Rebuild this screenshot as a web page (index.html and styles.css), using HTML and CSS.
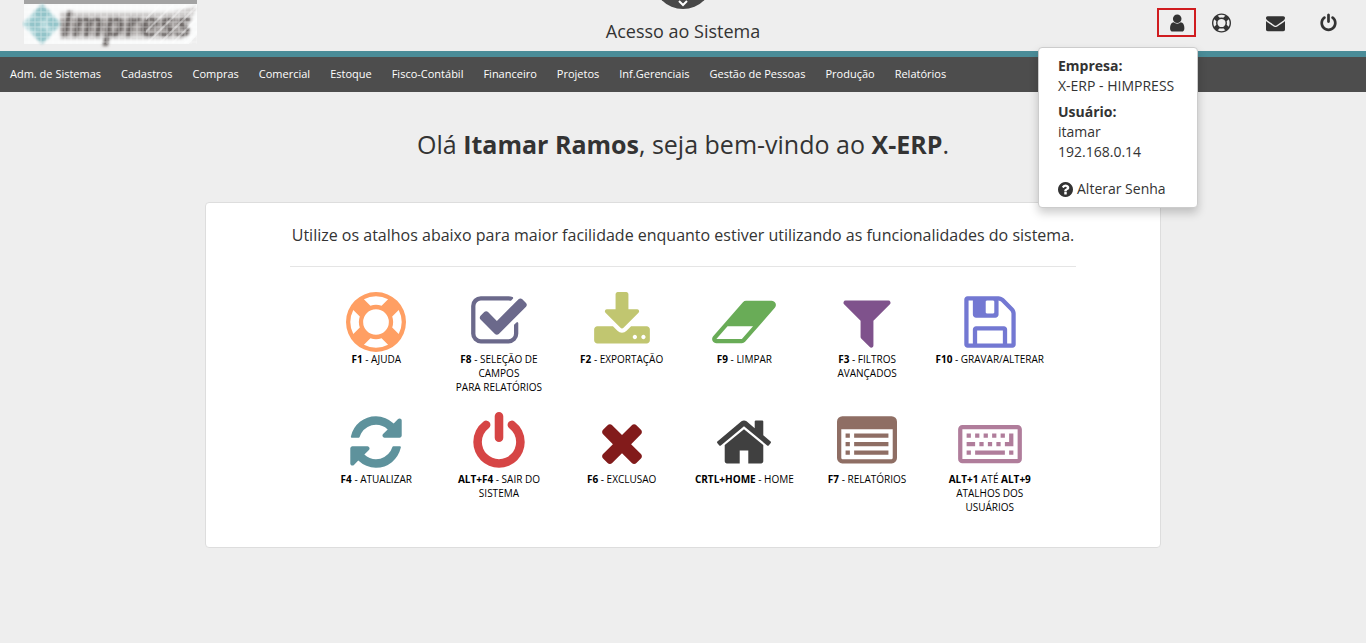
FILE: index.html
```html
<!DOCTYPE html>
<html lang="pt-BR">
<head>
<meta charset="utf-8">
<title>Acesso ao Sistema</title>
<link rel="stylesheet" href="styles.css">
</head>
<body>
<svg class="defs" aria-hidden="true">
  <symbol id="ring" viewBox="0 0 1792 1792"><path d="M896 0q182 0 348 71t286 191 191 286 71 348-71 348-191 286-286 191-348 71-348-71-286-191-191-286-71-348 71-348 191-286 286-191 348-71zm0 128q-190 0-361 90l194 194q82-28 167-28t167 28l194-194q-171-90-361-90zm-678 1129l194-194q-28-82-28-167t28-167l-194-194q-90 171-90 361t90 361zm678 407q190 0 361-90l-194-194q-82 28-167 28t-167-28l-194 194q171 90 361 90zm0-384q159 0 271.5-112.5t112.5-271.5-112.5-271.5-271.5-112.5-271.5 112.5-112.5 271.5 112.5 271.5 271.5 112.5zm484-217l194 194q90-171 90-361t-90-361l-194 194q28 82 28 167t-28 167z"/></symbol>
  <symbol id="power" viewBox="0 0 1792 1792"><path d="M1664 896q0 156-61 298t-164 245-245 164-298 61-298-61-245-164-164-245-61-298q0-182 80.5-343t226.5-270q43-32 95.5-25t83.5 50q32 42 24.5 94.5t-49.5 84.5q-98 74-151.5 181t-53.5 228q0 104 40.5 198.5t109.5 163.5 163.5 109.5 198.5 40.5 198.5-40.5 163.5-109.5 109.5-163.5 40.5-198.5q0-121-53.5-228t-151.5-181q-42-32-49.5-84.5t24.5-94.5q31-43 84-50t95 25q146 109 226.5 270t80.5 343zm-640-768v640q0 52-38 90t-90 38-90-38-38-90v-640q0-52 38-90t90-38 90 38 38 90z"/></symbol>
</svg>
<header class="topbar">
  <a class="logo" href="#" aria-label="Himpress">
    <svg class="logo-art" viewBox="0 0 176 51">
      <defs>
        <pattern id="mesh" width="6" height="5" patternUnits="userSpaceOnUse"><path d="M1 0v5M0 2h6" stroke="#fff" stroke-width="1" opacity=".4"/></pattern>
        <pattern id="hatch" width="9" height="9" patternUnits="userSpaceOnUse" patternTransform="rotate(45)"><path d="M2 0v9" stroke="#fff" stroke-width="2" opacity=".4"/></pattern>
        <filter id="soft" x="-10%" y="-10%" width="120%" height="120%"><feGaussianBlur stdDeviation="1.4"/></filter>
      </defs>
      <path d="M2 4h173v31l-8 9H2z" fill="#f9fafa"/>
      <path d="M2 0h173v4H2z" fill="#a3a3a3"/>
      <g filter="url(#soft)">
        <path d="M0 24L20 4l20 20-20 20z" fill="#b9dcdf"/>
        <path d="M20 4l9 9-9 9-9-9zM5 24l8-8 7 8-7 8zM20 27l9 8-9 9-9-9zM24 22l6-6 8 8-7 7z" fill="#93c4c9"/>
        <path d="M38 12h112l25-6-15 33H38z" fill="#d0cecd"/>
        <path d="M38 19h112l18-2-10 17H38z" fill="#aaa6a4"/>
        <text class="logo-word" x="39" y="37">Impress</text>
      </g>
      <path d="M2 4h173v40H2z" fill="url(#mesh)"/>
      <path d="M124 5h51v38h-51z" fill="url(#hatch)"/>
    </svg>
  </a>
  <div class="title-area">
    <button class="pull-tab" aria-label="Abrir painel">
      <svg viewBox="0 0 46 9"><circle cx="23" cy="-21" r="30" fill="#484848"/><path d="M19 1l4 4 4-4" fill="none" stroke="#fff" stroke-width="2"/></svg>
    </button>
    <h1 class="title">Acesso ao Sistema</h1>
  </div>
  <div class="tools">
    <div class="user">
      <button class="tool tool-user" aria-label="Usuário" aria-expanded="true">
        <svg class="tool-icon" viewBox="0 0 1664 1792"><path d="M1536 1399q0 109-62.5 187t-150.5 78h-854q-88 0-150.5-78t-62.5-187q0-85 8.5-160.5t31.5-152 58.5-131 94-89 134.5-34.5q131 128 313 128t313-128q76 0 134.5 34.5t94 89 58.5 131 31.5 152 8.5 160.5zm-256-887q0 159-112.5 271.5t-271.5 112.5-271.5-112.5-112.5-271.5 112.5-271.5 271.5-112.5 271.5 112.5 112.5 271.5z"/></svg>
      </button>
      <div class="user-menu">
        <dl class="user-info">
          <dt>Empresa:</dt><dd>X-ERP - HIMPRESS</dd>
          <dt>Usuário:</dt><dd>itamar</dd><dd>192.168.0.14</dd>
        </dl>
        <a class="password" href="#">
          <svg class="help-icon" viewBox="128 128 1536 1536"><path d="M1024 1376v-192q0-14-9-23t-23-9h-192q-14 0-23 9t-9 23v192q0 14 9 23t23 9h192q14 0 23-9t9-23zm256-672q0-88-55.5-163t-138.5-116-170-41q-243 0-371 213-15 24 8 42l132 100q7 6 19 6 16 0 25-12 53-68 86-92 34-24 86-24 48 0 85.5 26t37.5 59q0 38-20 61t-68 45q-63 28-115.5 86.5t-52.5 125.5v36q0 14 9 23t23 9h192q14 0 23-9t9-23q0-19 21.5-49.5t54.5-49.5q32-18 49-28.5t46-35 44.5-48 28-60.5 12.5-81zm384 192q0 209-103 385.5t-279.5 279.5-385.5 103-385.5-103-279.5-279.5-103-385.5 103-385.5 279.5-279.5 385.5-103 385.5 103 279.5 279.5 103 385.5z"/></svg>
          <span>Alterar Senha</span>
        </a>
      </div>
    </div>
    <button class="tool tool-help" aria-label="Ajuda"><svg class="tool-icon"><use href="#ring"/></svg></button>
    <button class="tool" aria-label="Mensagens"><svg class="tool-icon" viewBox="0 0 1792 1792"><path d="M1792 710v794q0 66-47 113t-113 47h-1472q-66 0-113-47t-47-113v-794q44 49 101 87 362 246 497 345 57 42 92.5 65.5t94.5 48 110 24.5h2q51 0 110-24.5t94.5-48 92.5-65.5q170-123 498-345 57-39 100-87zm0-294q0 79-49 151t-122 123q-376 261-468 325-10 7-42.5 31t-54 38.5-52 32.5-57.5 27-50 9h-2q-23 0-50-9t-57.5-27-52-32.5-54-38.5-42.5-31q-91-64-262-182.5t-205-142.5q-62-42-117-115.5t-55-136.5q0-78 41.5-130t118.5-52h1472q65 0 112.5 47t47.5 113z"/></svg></button>
    <button class="tool" aria-label="Sair"><svg class="tool-icon"><use href="#power"/></svg></button>
  </div>
</header>
<nav class="menu">
  <a href="#">Adm. de Sistemas</a><a href="#">Cadastros</a><a href="#">Compras</a><a href="#">Comercial</a><a href="#">Estoque</a><a href="#">Fisco-Contábil</a><a href="#">Financeiro</a><a href="#">Projetos</a><a href="#">Inf.Gerenciais</a><a href="#">Gestão de Pessoas</a><a href="#">Produção</a><a href="#">Relatórios</a>
</nav>
<main class="content">
  <h2 class="welcome">Olá <b>Itamar Ramos</b>, seja bem-vindo ao <b>X-ERP</b>.</h2>
  <section class="card">
    <p class="intro">Utilize os atalhos abaixo para maior facilidade enquanto estiver utilizando as funcionalidades do sistema.</p>
    <div class="shortcuts">
      <a class="shortcut" href="#"><svg class="icon orange"><use href="#ring"/></svg><span><b>F1</b> - AJUDA</span></a>
      <a class="shortcut" href="#"><svg class="icon slate" viewBox="0 0 1792 1792"><path d="M1472 930v318q0 119-84.5 203.5t-203.5 84.5h-832q-119 0-203.5-84.5t-84.5-203.5v-832q0-119 84.5-203.5t203.5-84.5h832q63 0 117 25 15 7 18 23 3 17-9 29l-49 49q-10 10-23 10-3 0-9-2-23-6-45-6h-832q-66 0-113 47t-47 113v832q0 66 47 113t113 47h832q66 0 113-47t47-113v-254q0-13 9-22l64-64q10-10 23-10 6 0 12 3 20 8 20 29zm231-489l-814 814q-24 24-57 24t-57-24l-430-430q-24-24-24-57t24-57l110-110q24-24 57-24t57 24l263 263 647-647q24-24 57-24t57 24l110 110q24 24 24 57t-24 57z"/></svg><span><b>F8</b> - SELEÇÃO DE CAMPOS<br>PARA RELATÓRIOS</span></a>
      <a class="shortcut" href="#"><svg class="icon olive" viewBox="0 0 1792 1792"><path d="M1344 1344q0-26-19-45t-45-19-45 19-19 45 19 45 45 19 45-19 19-45zm256 0q0-26-19-45t-45-19-45 19-19 45 19 45 45 19 45-19 19-45zm128-224v320q0 40-28 68t-68 28h-1472q-40 0-68-28t-28-68v-320q0-40 28-68t68-28h465l135 136q58 56 136 56t136-56l136-136h464q40 0 68 28t28 68zm-325-569q17 41-14 70l-448 448q-18 19-45 19t-45-19l-448-448q-31-29-14-70 17-39 59-39h256v-448q0-26 19-45t45-19h256q26 0 45 19t19 45v448h256q42 0 59 39z"/></svg><span><b>F2</b> - EXPORTAÇÃO</span></a>
      <a class="shortcut" href="#"><svg class="icon wide green" viewBox="0 0 2048 1792"><path d="M960 1408l336-384h-768l-336 384h768zm1013-1077q15 34 9.5 71.5t-30.5 65.5l-896 1024q-38 44-96 44h-768q-38 0-69.5-20.5t-47.5-54.5q-15-34-9.5-71.5t30.5-65.5l896-1024q38-44 96-44h768q38 0 69.5 20.5t47.5 54.5z"/></svg><span><b>F9</b> - LIMPAR</span></a>
      <a class="shortcut" href="#"><svg class="icon purple" viewBox="0 0 1792 1792"><path d="M1595 295q17 41-14 70l-493 493v742q0 42-39 59-13 5-25 5-27 0-45-19l-256-256q-19-19-19-45v-486l-493-493q-31-29-14-70 17-39 59-39h1280q42 0 59 39z"/></svg><span><b>F3</b> - FILTROS AVANÇADOS</span></a>
      <a class="shortcut" href="#"><svg class="icon blue" viewBox="0 0 1792 1792"><path d="M512 1536h768v-384h-768v384zm896 0h128v-896q0-14-10-38.5t-20-34.5l-281-281q-10-10-34-20t-39-10v416q0 40-28 68t-68 28h-576q-40 0-68-28t-28-68v-416h-128v1280h128v-416q0-40 28-68t68-28h832q40 0 68 28t28 68v416zm-384-928v-320q0-13-9.5-22.5t-22.5-9.5h-192q-13 0-22.5 9.5t-9.5 22.5v320q0 13 9.5 22.5t22.5 9.5h192q13 0 22.5-9.5t9.5-22.5zm640 32v928q0 40-28 68t-68 28h-1344q-40 0-68-28t-28-68v-1344q0-40 28-68t68-28h928q40 0 88 20t76 48l280 280q28 28 48 76t20 88z"/></svg><span><b>F10</b> - GRAVAR/ALTERAR</span></a>
      <a class="shortcut" href="#"><svg class="icon teal" viewBox="0 0 1792 1792"><path d="M1639 1056q0 5-1 7-64 268-268 434.5t-478 166.5q-146 0-282.5-55t-243.5-157l-129 129q-19 19-45 19t-45-19-19-45v-448q0-26 19-45t45-19h448q26 0 45 19t19 45-19 45l-137 137q71 66 161 102t187 36q134 0 250-65t186-179q11-17 53-117 8-23 30-23h192q13 0 22.5 9.5t9.5 22.5zm25-800v448q0 26-19 45t-45 19h-448q-26 0-45-19t-19-45 19-45l138-138q-148-137-349-137-134 0-250 65t-186 179q-11 17-53 117-8 23-30 23h-199q-13 0-22.5-9.5t-9.5-22.5v-7q65-268 270-434.5t480-166.5q146 0 284 55.5t245 156.5l130-129q19-19 45-19t45 19 19 45z"/></svg><span><b>F4</b> - ATUALIZAR</span></a>
      <a class="shortcut" href="#"><svg class="icon red"><use href="#power"/></svg><span><b>ALT+F4</b> - SAIR DO SISTEMA</span></a>
      <a class="shortcut" href="#"><svg class="icon maroon" viewBox="0 0 1792 1792"><path d="M1490 1322q0 40-28 68l-136 136q-28 28-68 28t-68-28l-294-294-294 294q-28 28-68 28t-68-28l-136-136q-28-28-28-68t28-68l294-294-294-294q-28-28-28-68t28-68l136-136q28-28 68-28t68 28l294 294 294-294q28-28 68-28t68 28l136 136q28 28 28 68t-28 68l-294 294 294 294q28 28 28 68z"/></svg><span><b>F6</b> - EXCLUSAO</span></a>
      <a class="shortcut" href="#"><svg class="icon dark" viewBox="0 0 1792 1792"><path d="M1472 992v480q0 26-19 45t-45 19h-384v-384h-256v384h-384q-26 0-45-19t-19-45v-480q0-1 .5-3t.5-3l575-474 575 474q1 2 1 6zm223-69l-62 74q-8 9-21 11h-3q-13 0-21-7l-692-577-692 577q-12 8-24 7-13-2-21-11l-62-74q-8-10-7-23.5t11-21.5l719-599q32-26 76-26t76 26l244 204v-195q0-14 9-23t23-9h192q14 0 23 9t9 23v408l219 182q10 8 11 21.5t-7 23.5z"/></svg><span><b>CRTL+HOME</b> - HOME</span></a>
      <a class="shortcut" href="#"><svg class="icon brown" viewBox="0 0 1792 1792"><path d="M160 128h1472a160 160 0 0 1 160 160v1088a160 160 0 0 1-160 160H160a160 160 0 0 1-160-160V288a160 160 0 0 1 160-160zM128 512v864q0 32 32 32h1472q32 0 32-32V512z"/><path d="M256 640h128v128H256zM512 640h1024v128H512zM256 896h128v128H256zM512 896h1024v128H512zM256 1152h128v128H256zM512 1152h1024v128H512z"/></svg><span><b>F7</b> - RELATÓRIOS</span></a>
      <a class="shortcut" href="#"><svg class="icon wide mauve" viewBox="-64 0 2048 1792"><path d="M128 384h1664a128 128 0 0 1 128 128v896a128 128 0 0 1-128 128H128a128 128 0 0 1-128-128V512a128 128 0 0 1 128-128zM128 512v896h1664V512z"/><path d="M256 640h128v128H256zM512 640h128v128H512zM768 640h128v128H768zM1024 640h128v128h-128zM1280 640h128v128h-128zM1536 640h128v384h-256V896h128zM256 896h256v128H256zM640 896h128v128H640zM896 896h128v128H896zM1152 896h128v128h-128zM256 1152h128v128H256zM512 1152h896v128H512zM1536 1152h128v128h-128z"/></svg><span><b>ALT+1</b> ATÉ <b>ALT+9</b> ATALHOS DOS USUÁRIOS</span></a>
    </div>
  </section>
</main>
</body>
</html>
```
FILE: styles.css
```css
* { box-sizing: border-box; }

body {
  margin: 0;
  background: #eee;
  color: #333;
  font: 14px/20px "Open Sans", sans-serif;
}

h1, h2, p, dl, dd { margin: 0; }
a { color: inherit; text-decoration: none; }
button { border: 0; padding: 0; background: none; color: inherit; cursor: pointer; }
svg { display: block; fill: currentColor; fill-rule: evenodd; }
.defs { position: absolute; width: 0; height: 0; }

.topbar {
  display: grid;
  grid-template-columns: 1fr auto 1fr;
  height: 57px;
  border-bottom: 6px solid #4a8c98;
}

.logo { padding-left: 22px; }
.logo-art { width: 176px; height: 51px; }
.logo-word {
  fill: #6b6564;
  font: italic bold 35px "Open Sans", sans-serif;
}

.title-area { display: flex; flex-direction: column; align-items: center; gap: 10px; }
.pull-tab svg { width: 46px; height: 9px; }
.title { font-size: 18px; font-weight: 400; line-height: 24px; }

.tools {
  display: flex;
  justify-content: flex-end;
  align-items: flex-start;
  gap: 14px;
  padding: 8px 18px 0 0;
}
.tool { display: grid; place-items: center; width: 39px; height: 30px; }
.tool-icon { width: 19px; height: 20px; }
.tool-user { height: 29px; border: 2px solid #d01c1f; }
.tool-help { margin-right: 1px; margin-left: -8px; }

.user { position: relative; }
.user-menu {
  position: absolute;
  z-index: 2;
  top: 39px;
  right: -2px;
  width: 160px;
  padding: 8px 19px;
  border: 1px solid #ccc;
  border-radius: 4px;
  background: #fff;
  box-shadow: 0 5px 10px rgba(0, 0, 0, .2);
  white-space: nowrap;
}
.user-info { margin-bottom: 17px; }
.user-info dt { font-weight: 700; }
.user-info dd + dt { margin-top: 6px; }
.password { display: flex; align-items: center; gap: 4px; }
.help-icon { width: 15px; height: 15px; }

.menu {
  display: flex;
  gap: 20px;
  padding: 7px 10px 8px;
  background: #4d4d4d;
  color: #fff;
  font-size: 11px;
}

.content { padding: 34px 15% 0; }
.welcome {
  font-size: 25px;
  font-weight: 400;
  line-height: 36px;
  text-align: center;
}

.card {
  margin-top: 40px;
  padding: 20px 84px 33px;
  border: 1px solid #ddd;
  border-radius: 4px;
  background: #fff;
}
.intro {
  padding-bottom: 19px;
  border-bottom: 1px solid #e5e5e5;
  font-size: 16px;
  line-height: 24px;
  text-align: center;
}

.shortcuts {
  display: grid;
  grid-template-columns: repeat(6, 1fr);
  gap: 18px 0;
  padding: 25px 25px 0;
}
.shortcut {
  display: flex;
  flex-direction: column;
  align-items: center;
  padding: 0 6px;
  color: #000;
  font-size: 10px;
  line-height: 14px;
  text-align: center;
}
.shortcut span { max-width: 112px; padding: 0 1px; }
.icon { width: 60px; height: 60px; }
.icon.wide { width: 68px; }

.orange { color: #ff9f63; }
.slate { color: #6b698b; }
.olive { color: #c1c670; }
.green { color: #69ac57; }
.purple { color: #7f528c; }
.blue { color: #7378d2; }
.teal { color: #5e929c; }
.red { color: #d64545; }
.maroon { color: #821b1b; }
.dark { color: #404040; }
.brown { color: #8f6e64; }
.mauve { color: #b07d9b; }
```
